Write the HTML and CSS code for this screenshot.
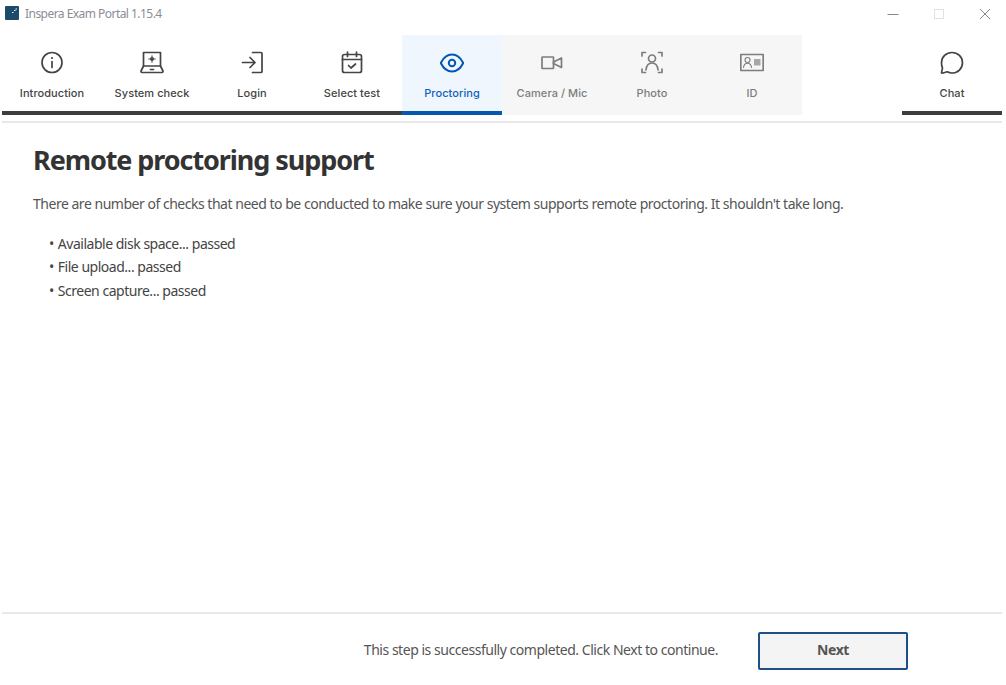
FILE: index.html
```html
<!DOCTYPE html>
<html lang="en">
<head>
<meta charset="utf-8">
<title>Inspera Exam Portal 1.15.4</title>
<link rel="stylesheet" href="styles.css">
</head>
<body>
<div class="app">
  <header class="titlebar">
    <div class="title-left">
      <svg class="logo" width="14" height="14" viewBox="0 0 14 14"><rect width="14" height="14" rx="1" fill="#1c4a6b"/><path d="M7 6.500h1.500M9 4.500h1.500M10.500 3h1.500" stroke="#fff" stroke-width="1.200"/></svg>
      <span class="app-title">Inspera Exam Portal 1.15.4</span>
    </div>
    <div class="win-controls">
      <span class="win-btn"><svg width="12" height="12" viewBox="0 0 12 12"><path d="M0.500 6.500h11" stroke="#8a8a8a"/></svg></span>
      <span class="win-btn"><svg width="12" height="12" viewBox="0 0 12 12"><rect x="1.500" y="1.500" width="9" height="9" fill="none" stroke="#e2e2e2"/></svg></span>
      <span class="win-btn"><svg width="12" height="12" viewBox="0 0 12 12"><path d="M1 1l10 10M11 1L1 11" stroke="#777" stroke-width="0.900"/></svg></span>
    </div>
  </header>

  <nav class="tabs">
    <div class="tab-group">
      <div class="tab done">
        <svg class="ico" viewBox="0 0 24 24"><circle cx="12" cy="11.500" r="10"/><path d="M12 10.500v6"/><circle class="dot" cx="12" cy="7" r="1.100"/></svg>
        <span>Introduction</span>
      </div>
      <div class="tab done">
        <svg class="ico" viewBox="0 0 24 24"><path d="M3.500 15V1.500h17V15"/><path d="M3.500 15L1 20a1.200 1.200 0 0 0 1 1.500h20a1.200 1.200 0 0 0 1-1.500L20.500 15z"/><path d="M10.500 18.500h3"/><circle class="dot" cx="12" cy="8" r="2"/><path class="thin" d="M12 4.800v1M12 10.200v1M8.800 8h1M14.200 8h1"/></svg>
        <span>System check</span>
      </div>
      <div class="tab done">
        <svg class="ico" viewBox="0 0 24 24"><path d="M2.500 11.500h12.500M10 6.500l5 5-5 5"/><path d="M12.500 1.500h8.500a1 1 0 0 1 1 1v18a1 1 0 0 1-1 1h-8.500"/></svg>
        <span>Login</span>
      </div>
      <div class="tab done">
        <svg class="ico" viewBox="0 0 24 24"><rect x="2.500" y="3.500" width="19" height="18" rx="2"/><path d="M2.500 8.500h19M7.500 1v4.500M16.500 1v4.500"/><path d="M8.500 14.500l2.500 2.500 4.500-4"/></svg>
        <span>Select test</span>
      </div>
      <div class="tab active">
        <svg class="ico eye" viewBox="0 0 24 24"><path d="M0.800 12C3.500 6.500 7.500 3.500 12 3.500S20.500 6.500 23.200 12c-2.700 5.500-6.700 8.500-11.200 8.500S3.500 17.500 0.800 12z"/><circle cx="12" cy="12" r="3.200"/></svg>
        <span>Proctoring</span>
      </div>
      <div class="tab pending">
        <svg class="ico" viewBox="0 0 24 24"><rect x="2" y="6" width="11.500" height="11.500" rx="0.500"/><path d="M13.500 11l8-4v9.500l-8-4z"/></svg>
        <span>Camera / Mic</span>
      </div>
      <div class="tab pending">
        <svg class="ico" viewBox="0 0 24 24"><path d="M2 5V1.500h3.500M18.500 1.500H22V5M2 18v3.500h3.500M18.500 21.500H22V18"/><circle cx="12" cy="7.500" r="3.500"/><path d="M6 19c.4-4.500 2.800-7 6-7s5.600 2.500 6 7"/></svg>
        <span>Photo</span>
      </div>
      <div class="tab pending">
        <svg class="ico" viewBox="0 0 24 24"><rect x="0.800" y="3.500" width="22.400" height="16"/><g class="thin"><circle cx="7.500" cy="9" r="2.500"/><path d="M3.500 16.500c.3-2.800 1.800-4.300 4-4.300s3.700 1.500 4 4.300"/></g><rect class="fill" x="14" y="8" width="6.500" height="6.500"/></svg>
        <span>ID</span>
      </div>
    </div>
    <div class="tab done">
      <svg class="ico" viewBox="0 0 24 24"><path d="M12 1.500c5.800 0 10.500 4.500 10.500 10.300S17.800 22 12 22c-1.800 0-3.400-.4-4.800-1.200L2.200 22.200c-.5.100-.8-.3-.7-.7l1-4.400C1.900 15.800 1.500 13.900 1.500 11.800 1.500 6 6.200 1.500 12 1.500z"/></svg>
      <span>Chat</span>
    </div>
  </nav>

  <div class="rule top-rule"></div>

  <main class="content">
    <h1>Remote proctoring support</h1>
    <p class="intro">There are number of checks that need to be conducted to make sure your system supports remote proctoring. It shouldn't take long.</p>
    <ul class="checks">
      <li>Available disk space... passed</li>
      <li class="tight">File upload... passed</li>
      <li>Screen capture... passed</li>
    </ul>
  </main>

  <div class="rule"></div>

  <footer class="footer">
    <span class="status">This step is successfully completed. Click Next to continue.</span>
    <button class="next" type="button">Next</button>
  </footer>
</div>
</body>
</html>
```

FILE: styles.css
```css
* { box-sizing: border-box; }
html, body { margin: 0; height: 100%; background: #fff; overflow: hidden; }
.app {
  width: 1006px;
  height: 685px;
  display: flex;
  flex-direction: column;
  font-family: "Noto Sans", "Open Sans", sans-serif;
  color: #444;
}
.titlebar {
  height: 35px;
  flex: none;
  display: flex;
  justify-content: space-between;
  padding-left: 5px;
  padding-top: 6px;
}
.title-left { display: flex; align-items: flex-start; gap: 6px; }
.logo { display: block; flex: none; }
.app-title {
  font-size: 12px;
  letter-spacing: -0.54px;
  line-height: 16px;
  color: #8c8c96;
}
.win-controls { display: flex; margin: -5px -2px 0 0; }
.win-btn {
  width: 46px;
  height: 26px;
  display: flex;
  align-items: center;
  justify-content: center;
}
.tabs {
  flex: none;
  height: 80px;
  margin: 0 4px 0 2px;
  display: flex;
  justify-content: space-between;
  font-family: Inter, sans-serif;
}
.tab-group { display: flex; }
.tab {
  width: 100px;
  height: 80px;
  display: flex;
  flex-direction: column;
  align-items: center;
  padding-top: 16px;
  font-size: 11px;
  font-weight: 450;
  letter-spacing: 0.06px;
  line-height: 14px;
  border-bottom: 4px solid #3d3d3d;
  color: #444;
}
.ico {
  width: 24px;
  height: 24px;
  margin-bottom: 11px;
  fill: none;
  stroke: #444;
  stroke-width: 1.700;
  stroke-linecap: round;
  stroke-linejoin: round;
  display: block;
}
.ico .dot { fill: #444; stroke: none; }
.ico .thin { stroke-width: 1.100; }
.ico .fill { fill: #a8a8a8; stroke: none; }
.ico.eye { stroke-width: 2; }
.tab.active { background: #eff6fe; border-bottom-color: #0558b0; color: #0f62b8; }
.tab.active .ico { stroke: #0558b0; }
.tab.pending { background: #f6f6f6; border-bottom-color: #f6f6f6; color: #7d7d7d; }
.tab.pending .ico { stroke: #7d7d7d; }
.rule {
  flex: none;
  height: 2px;
  margin: 0 4px 0 2px;
  background: #e8e8e8;
}
.top-rule { margin-top: 6px; }
.content {
  flex: 1;
  padding: 18px 31px 0 33px;
}
h1 {
  margin: 0;
  font-size: 27px;
  letter-spacing: -1.08px;
  line-height: 38px;
  font-weight: 700;
  color: #333;
}
.intro {
  margin: 15px 0 0;
  font-size: 14px;
  letter-spacing: -0.48px;
  line-height: 20px;
  color: #555;
}
.checks {
  list-style: none;
  margin: 20px 0 0;
  padding: 0 0 0 16px;
  font-size: 14px;
  letter-spacing: -0.48px;
  color: #444;
}
.checks li { line-height: 20px; margin-bottom: 4px; }
.checks li.tight { margin-top: -1px; }
.checks li::before { content: "\2022"; margin-right: 4px; }
.footer {
  flex: none;
  height: 71px;
  display: flex;
  justify-content: flex-end;
  align-items: flex-start;
  padding: 18px 98px 0 0;
  gap: 40px;
}
.status { font-size: 14px; letter-spacing: -0.465px; line-height: 38px; margin-top: -1px; color: #555; }
.next {
  width: 150px;
  height: 38px;
  padding: 0 0 4px;
  background: #f4f4f4;
  border: 2px solid #1e4f87;
  border-radius: 2px;
  font-family: "Noto Sans", sans-serif;
  font-size: 14px;
  letter-spacing: -0.465px;
  font-weight: 700;
  color: #555;
}
```
